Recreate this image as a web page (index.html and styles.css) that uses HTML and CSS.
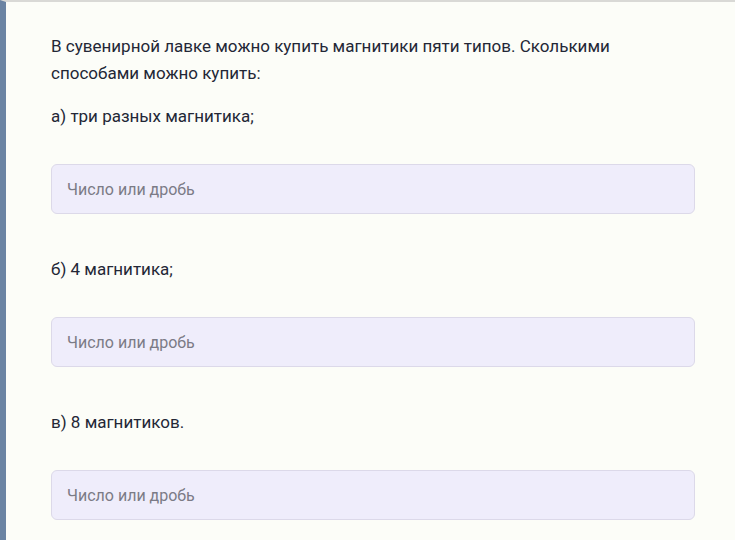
FILE: index.html
```html
<!DOCTYPE html>
<html>
<head>
    <meta charset="UTF-8">
    <meta name="viewport" content="width=device-width, initial-scale=1.0">
    <title>Задача</title>
    <link rel="stylesheet" href="styles.css">
</head>
<body>
    <div class="task">
        <div class="task-body">
            <p class="task-text">В сувенирной лавке можно купить магнитики пяти типов. Сколькими способами можно купить:</p>
            <div class="question">
                <p class="question-label">а) три разных магнитика;</p>
                <input type="text" class="answer-input" placeholder="Число или дробь">
            </div>
            <div class="question">
                <p class="question-label">б) 4 магнитика;</p>
                <input type="text" class="answer-input" placeholder="Число или дробь">
            </div>
            <div class="question">
                <p class="question-label">в) 8 магнитиков.</p>
                <input type="text" class="answer-input" placeholder="Число или дробь">
            </div>
        </div>
    </div>
</body>
</html>
```

FILE: styles.css
```css
html, body {
    margin: 0;
    padding: 0;
    height: 100%;
}

body {
    background-color: #fcfdf8;
    font-family: Roboto, "Liberation Sans", sans-serif;
    color: #232736;
    overflow: hidden;
}

.task {
    display: flex;
    min-height: 100%;
    border-top: 2px solid #d9d9d6;
    border-left: 6px solid #6b84a3;
    box-sizing: border-box;
}

.task-body {
    flex: 1;
    padding: 31px 40px 0 45px;
}

.task-text {
    margin: 0 0 16px;
    font-size: 17px;
    line-height: 27px;
}

.question {
    margin-bottom: 42px;
}

.question-label {
    margin: 0 0 34px;
    font-size: 17px;
    line-height: 27px;
}

.answer-input {
    display: block;
    width: 100%;
    height: 50px;
    box-sizing: border-box;
    padding: 0 15px;
    background-color: #efedfb;
    border: 1px solid #dcd9e9;
    border-radius: 6px;
    font-family: Roboto, "Liberation Sans", sans-serif;
    font-size: 16px;
    color: #232736;
    outline: none;
}

.answer-input::placeholder {
    color: #7b7b86;
}
```
